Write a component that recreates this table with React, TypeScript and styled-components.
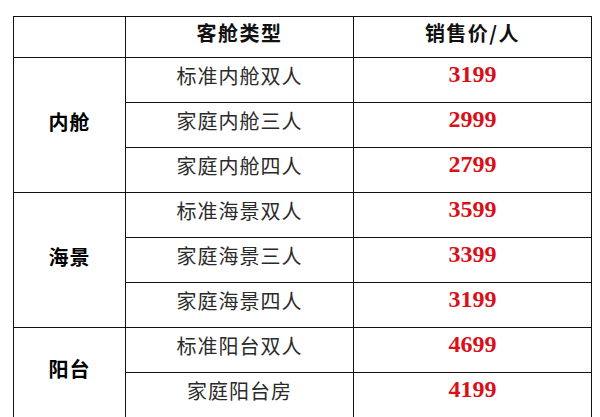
import styled, { createGlobalStyle } from 'styled-components';

const GlobalStyle = createGlobalStyle`
  html, body {
    margin: 0;
    padding: 0;
    background: #fff;
  }
  body {
    font-family: "Noto Sans CJK SC", "Liberation Sans", sans-serif;
  }
`;

interface Cabin {
  name: string;
  price: number;
}

interface Group {
  label: string;
  cabins: Cabin[];
}

const groups: Group[] = [
  {
    label: '内舱',
    cabins: [
      { name: '标准内舱双人', price: 3199 },
      { name: '家庭内舱三人', price: 2999 },
      { name: '家庭内舱四人', price: 2799 },
    ],
  },
  {
    label: '海景',
    cabins: [
      { name: '标准海景双人', price: 3599 },
      { name: '家庭海景三人', price: 3399 },
      { name: '家庭海景四人', price: 3199 },
    ],
  },
  {
    label: '阳台',
    cabins: [
      { name: '标准阳台双人', price: 4699 },
      { name: '家庭阳台房', price: 4199 },
    ],
  },
];

const Page = styled.div`
  padding: 16px 0 0 13px;
  height: 417px;
  box-sizing: border-box;
  overflow: hidden;
`;

const PriceTable = styled.table`
  border-collapse: collapse;
  table-layout: fixed;
  width: 575px;
  color: #111;
`;

const HeadRow = styled.tr`
  height: 41px;
`;

const HeadCell = styled.th<{ $width: number }>`
  width: ${(p) => p.$width}px;
  padding: 3px 0 0;
  border: 1px solid #111;
  vertical-align: top;
  font-size: 20px;
  font-weight: 700;
  letter-spacing: 1.5px;
  line-height: 26px;
`;

const Row = styled.tr`
  height: 45px;
`;

const GroupCell = styled.td`
  border: 1px solid #111;
  padding: 0 0 8px;
  text-align: center;
  vertical-align: middle;
  font-size: 20px;
  font-weight: 700;
  letter-spacing: 1px;
  color: #000;
`;

const NameCell = styled.td`
  border: 1px solid #111;
  padding: 5px 0 0;
  text-align: center;
  vertical-align: top;
  font-size: 20px;
  line-height: 26px;
  letter-spacing: 1px;
  color: #2a2a2a;
`;

const PriceCell = styled.td`
  border: 1px solid #111;
  padding: 2px 0 0;
  text-align: center;
  vertical-align: top;
  font-family: "Liberation Serif", "Times New Roman", serif;
  font-size: 24px;
  font-weight: 700;
  line-height: 28px;
  color: #d90f1a;
`;

const App = () => {
  return (
    <Page>
      <GlobalStyle />
      <PriceTable>
        <thead>
          <HeadRow>
            <HeadCell $width={111} />
            <HeadCell $width={227}>客舱类型</HeadCell>
            <HeadCell $width={237}>销售价/人</HeadCell>
          </HeadRow>
        </thead>
        <tbody>
          {groups.map((group) =>
            group.cabins.map((cabin, i) => (
              <Row key={cabin.name}>
                {i === 0 && <GroupCell rowSpan={group.cabins.length}>{group.label}</GroupCell>}
                <NameCell>{cabin.name}</NameCell>
                <PriceCell>{cabin.price}</PriceCell>
              </Row>
            ))
          )}
        </tbody>
      </PriceTable>
    </Page>
  );
};

export default App;
